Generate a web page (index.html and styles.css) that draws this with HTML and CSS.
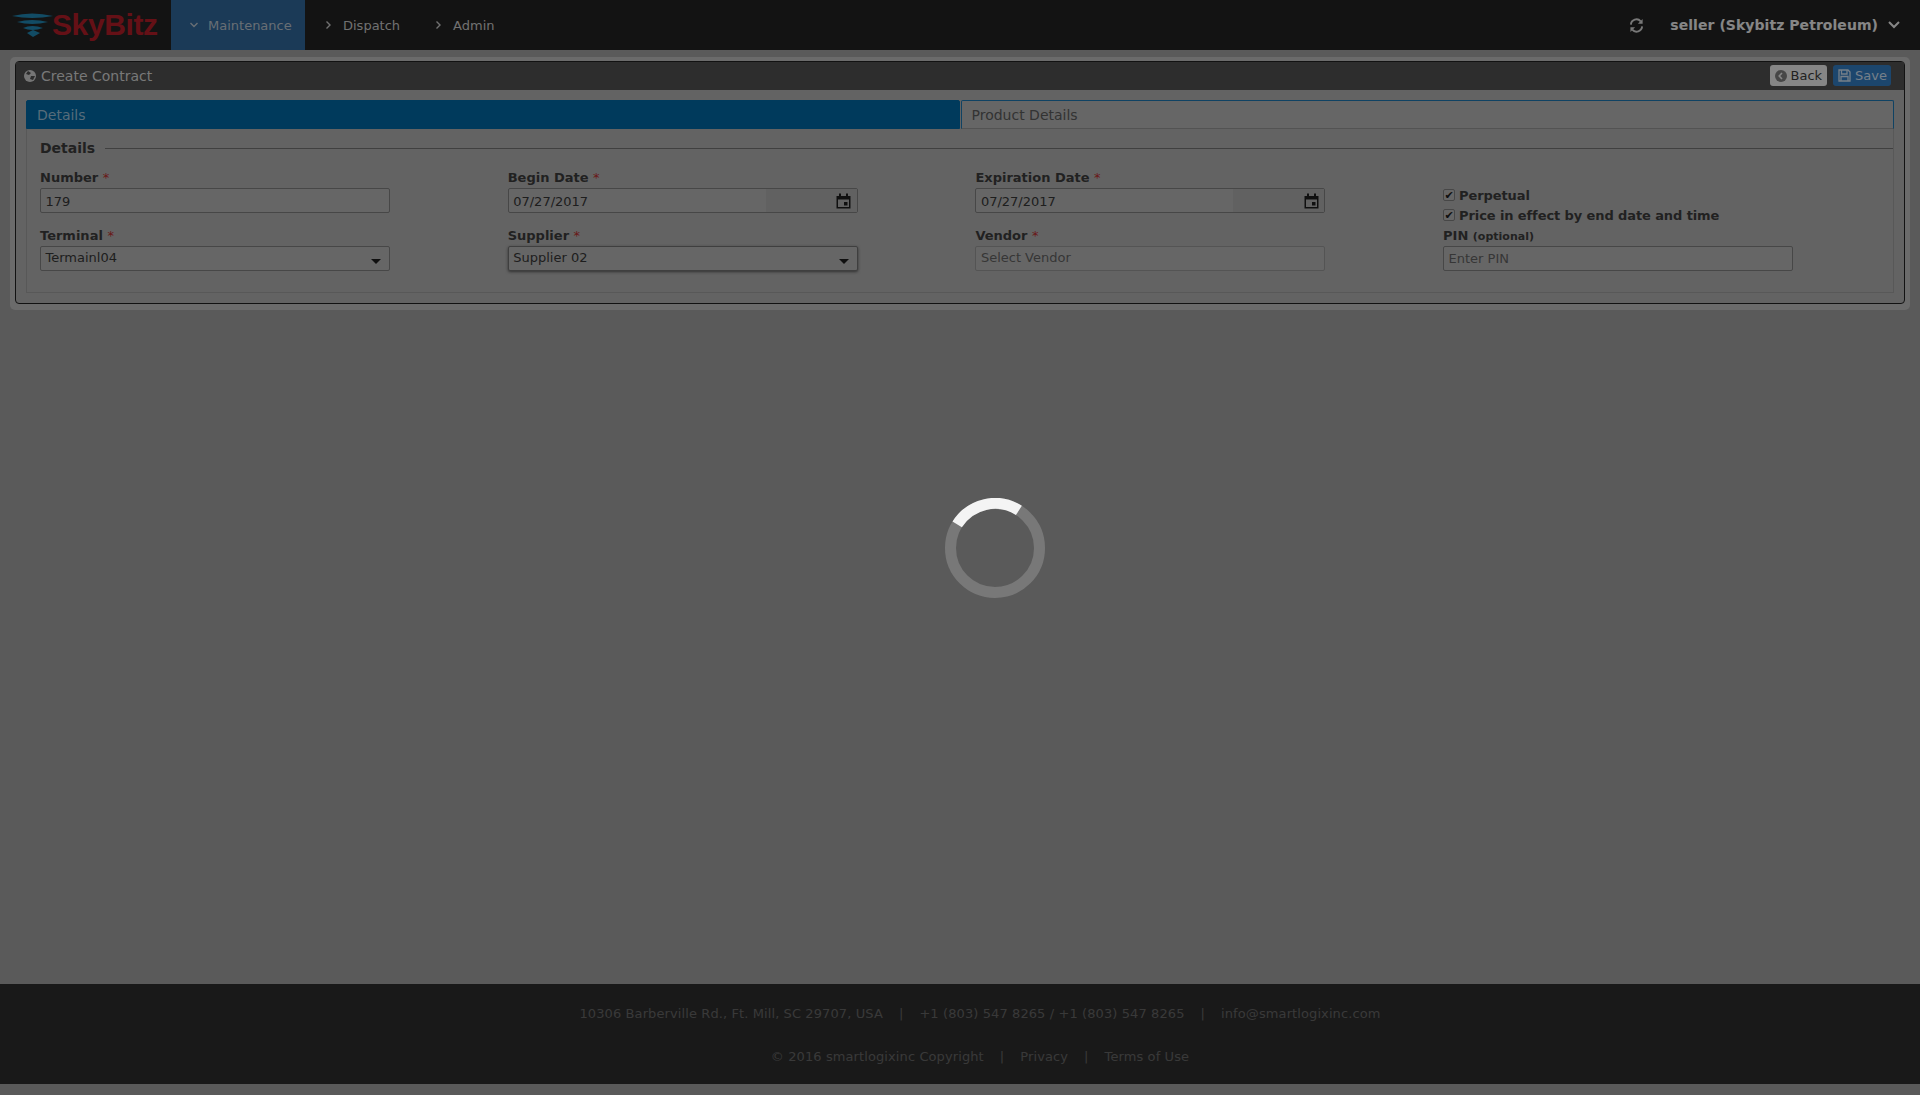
FILE: index.html
```html
<!DOCTYPE html>
<html lang="en">
<head>
    <meta charset="UTF-8">
    <meta name="viewport" content="width=device-width, initial-scale=1.0">
    <title>Create Contract</title>
    <link rel="stylesheet" href="styles.css">
</head>
<body>
    <header class="topbar">
        <a class="logo">
            <svg class="logo-mark" width="42" height="26" viewBox="0 0 42 26">
                <path d="M0 4 Q20 -1 41 4 Q20 8 0 4Z" fill="#1f7fa8"/>
                <path d="M5 10 Q20 6 36 10 Q20 14 5 10Z" fill="#1f7fa8"/>
                <path d="M11 16 Q20 12 31 16 Q20 20 11 16Z" fill="#1f7fa8"/>
                <path d="M15 21 L21 18 L28 21 L21 25Z" fill="#1f7fa8"/>
            </svg>
            <span class="logo-text">SkyBitz</span>
        </a>
        <nav class="nav">
            <a class="nav-item active">
                <svg width="10" height="10" viewBox="0 0 10 10"><path d="M1.5 3 L5 6.5 L8.5 3" class="chev"/></svg>
                Maintenance
            </a>
            <a class="nav-item">
                <svg width="10" height="10" viewBox="0 0 10 10"><path d="M3.5 1.5 L7 5 L3.5 8.5" class="chev"/></svg>
                Dispatch
            </a>
            <a class="nav-item">
                <svg width="10" height="10" viewBox="0 0 10 10"><path d="M3.5 1.5 L7 5 L3.5 8.5" class="chev"/></svg>
                Admin
            </a>
        </nav>
        <div class="user-area">
            <svg class="refresh" width="15" height="15" viewBox="0 0 16 16">
                <path d="M2 7 A6 6 0 0 1 12.5 3.5" class="refresh-line"/>
                <path d="M14 9 A6 6 0 0 1 3.5 12.5" class="refresh-line"/>
                <path d="M14.5 1 V6.2 H9.5Z" class="refresh-tip"/>
                <path d="M1.5 15 V9.8 H6.5Z" class="refresh-tip"/>
            </svg>
            <span class="user-name">seller (Skybitz Petroleum)</span>
            <svg width="14" height="14" viewBox="0 0 14 14"><path d="M2 4 L7 9 L12 4" class="user-chev"/></svg>
        </div>
    </header>

    <main class="page">
        <section class="panel-wrap">
            <div class="panel">
                <div class="panel-head">
                    <div class="panel-title">
                        <svg width="12" height="12" viewBox="0 0 12 12">
                            <circle cx="6" cy="6" r="6" fill="#c4c4c4"/>
                            <path d="M4 1 L7 3 L5 5 L2 4Z M7 6 L11 6 L9 10 L6 9Z" fill="#4b4b4b"/>
                        </svg>
                        Create Contract
                    </div>
                    <div class="panel-actions">
                        <button class="btn btn-back">
                            <svg width="12" height="12" viewBox="0 0 12 12">
                                <circle cx="6" cy="6" r="6" fill="#777"/>
                                <path d="M7 3 L4.2 6 L7 9" fill="none" stroke="#e0e0e0" stroke-width="1.6"/>
                            </svg>
                            Back
                        </button>
                        <button class="btn btn-save">
                            <svg width="13" height="13" viewBox="0 0 13 13">
                                <path d="M1 1 H10 L12 3 V12 H1Z M3.5 1.5 V5 H9 V1.5 M3 12 V7.5 H10 V12" fill="none" stroke="#c4d4e4" stroke-width="1.3"/>
                            </svg>
                            Save
                        </button>
                    </div>
                </div>
                <div class="panel-body">
                    <div class="tabs">
                        <a class="tab tab-active">Details</a>
                        <a class="tab">Product Details</a>
                    </div>
                    <div class="fieldset">
                        <div class="legend"><span>Details</span></div>
                        <div class="form-grid">
                            <div class="field">
                                <label>Number <em>*</em></label>
                                <div class="input">179</div>
                            </div>
                            <div class="field">
                                <label>Begin Date <em>*</em></label>
                                <div class="input input-date">
                                    07/27/2017
                                    <span class="date-btn">
                                        <svg width="17" height="16" viewBox="0 0 16 16"><path d="M1 3 H15 V15.5 H1Z M2.5 6.5 V14 H13.5 V6.5Z M3.5 0.5 H5.5 V3 H3.5Z M10.5 0.5 H12.5 V3 H10.5Z M8.5 9 H12 V12.5 H8.5Z" fill="#1c1c1c" fill-rule="evenodd"/></svg>
                                    </span>
                                </div>
                            </div>
                            <div class="field">
                                <label>Expiration Date <em>*</em></label>
                                <div class="input input-date">
                                    07/27/2017
                                    <span class="date-btn">
                                        <svg width="17" height="16" viewBox="0 0 16 16"><path d="M1 3 H15 V15.5 H1Z M2.5 6.5 V14 H13.5 V6.5Z M3.5 0.5 H5.5 V3 H3.5Z M10.5 0.5 H12.5 V3 H10.5Z M8.5 9 H12 V12.5 H8.5Z" fill="#1c1c1c" fill-rule="evenodd"/></svg>
                                    </span>
                                </div>
                            </div>
                            <div class="field checks">
                                <div class="check"><span class="box">&#10004;</span>Perpetual</div>
                                <div class="check"><span class="box">&#10004;</span>Price in effect by end date and time</div>
                            </div>
                            <div class="field">
                                <label>Terminal <em>*</em></label>
                                <div class="input input-select">Termainl04<i class="caret"></i></div>
                            </div>
                            <div class="field">
                                <label>Supplier <em>*</em></label>
                                <div class="input input-select input-focus">Supplier 02<i class="caret"></i></div>
                            </div>
                            <div class="field">
                                <label>Vendor <em>*</em></label>
                                <div class="input input-select input-faint placeholder">Select Vendor</div>
                            </div>
                            <div class="field">
                                <label>PIN <small>(optional)</small></label>
                                <div class="input input-pin placeholder">Enter PIN</div>
                            </div>
                        </div>
                    </div>
                </div>
            </div>
        </section>
    </main>

    <footer class="footer">
        <p>10306 Barberville Rd., Ft. Mill, SC 29707, USA<span class="sep">|</span>+1 (803) 547 8265 / +1 (803) 547 8265<span class="sep">|</span>info@smartlogixinc.com</p>
        <p>&copy; 2016 smartlogixinc Copyright<span class="sep">|</span>Privacy<span class="sep">|</span>Terms of Use</p>
    </footer>

    <div class="overlay">
        <svg width="100" height="100" viewBox="0 0 100 100">
            <circle cx="50" cy="50" r="44.5" fill="none" stroke="#787878" stroke-width="11"/>
            <path d="M12.2 26.4 A44.5 44.5 0 0 1 73.9 12.4" fill="none" stroke="#f4f4f4" stroke-width="11"/>
        </svg>
    </div>
</body>
</html>
```

FILE: styles.css
```css
* {
    box-sizing: border-box;
}
html, body {
    height: 100%;
}
body {
    margin: 0;
    display: flex;
    flex-direction: column;
    font-family: "DejaVu Sans", Verdana, sans-serif;
    font-size: 13px;
    color: #383838;
    background-color: #969696;
}
.topbar {
    height: 50px;
    flex-shrink: 0;
    display: flex;
    align-items: stretch;
    background-color: #212121;
}
.logo {
    width: 171px;
    display: flex;
    align-items: center;
    padding: 0 0 0 12px;
}
.logo-mark {
    flex-shrink: 0;
    margin-right: -2px;
}
.logo-text {
    font-family: "Liberation Sans", Arial, sans-serif;
    font-weight: bold;
    font-size: 30px;
    letter-spacing: -0.4px;
    color: #a81c26;
}
.nav {
    display: flex;
}
.nav-item {
    display: flex;
    align-items: center;
    gap: 10px;
    padding: 0 15px 0 18px;
    color: #bdbdbd;
}
.nav-item svg {
    flex-shrink: 0;
}
.nav-item.active {
    width: 134px;
    padding: 0 0 0 18px;
    gap: 9px;
    background-color: #2d6191;
    color: #aeb8c2;
}
.chev {
    fill: none;
    stroke: currentColor;
    stroke-width: 1.4;
}
.user-area {
    margin-left: auto;
    display: flex;
    align-items: center;
    padding-right: 19px;
    color: #e0e0e0;
}
.refresh {
    margin-right: 26px;
}
.refresh-line {
    fill: none;
    stroke: #c8c8c8;
    stroke-width: 2;
}
.refresh-tip {
    fill: #c8c8c8;
}
.user-name {
    font-weight: bold;
    font-size: 14px;
    letter-spacing: 0.05px;
    margin-right: 9px;
}
.user-chev {
    fill: none;
    stroke: #e0e0e0;
    stroke-width: 2;
}
.page {
    flex: 1;
    padding: 7px 10px 0;
}
.panel-wrap {
    padding: 4px 5px 6px;
    border-radius: 5px;
    background-color: #b2b2b2;
}
.panel {
    border: 1px solid #1f1f1f;
    border-radius: 4px;
    background-color: #a5a5a5;
}
.panel-head {
    height: 28px;
    display: flex;
    align-items: center;
    justify-content: space-between;
    padding: 0 13px 0 8px;
    background-color: #4b4b4b;
}
.panel-title {
    display: flex;
    align-items: center;
    gap: 5px;
    font-size: 14px;
    color: #c8c8c8;
}
.panel-actions {
    display: flex;
    gap: 6px;
    margin-top: -1px;
}
.btn {
    height: 21px;
    display: flex;
    align-items: center;
    gap: 4px;
    padding: 0 4px 0 5px;
    border: 0;
    border-radius: 3px;
    font-family: inherit;
    font-size: 13px;
}
.btn-back {
    padding-right: 5px;
    background-color: #e0e0e0;
    color: #383838;
}
.btn-save {
    background-color: #3076b6;
    color: #c4d4e4;
}
.panel-body {
    padding: 10px;
}
.tabs {
    display: flex;
    gap: 1px;
}
.tab {
    flex: 1;
    height: 29px;
    display: flex;
    align-items: center;
    padding: 0 10px;
    font-size: 14px;
    color: #555;
    border: 1px solid #1a6ea5;
    border-bottom-color: #8a8a8a;
    border-radius: 2px 2px 0 0;
    background-color: #aaa;
}
.tab-active {
    border-color: #006199;
    background-color: #006199;
    color: #8fb4cc;
}
.fieldset {
    height: 164px;
    padding: 0 13px;
    border: 1px solid #939393;
    border-top: 0;
}
.legend {
    height: 38px;
    display: flex;
    align-items: center;
    gap: 10px;
    font-size: 14px;
    font-weight: bold;
}
.legend::after {
    content: "";
    flex: 1;
    margin-right: -13px;
    height: 1px;
    background-color: #6c6c6c;
}
.form-grid {
    display: grid;
    grid-template-columns: repeat(3, 467.7px) 1fr;
    row-gap: 2px;
    margin-top: 2px;
}
.field label {
    display: block;
    height: 19px;
    line-height: 18px;
    font-weight: bold;
}
em {
    font-style: normal;
    font-weight: normal;
    color: #b02a2a;
}
small {
    font-size: 11px;
}
.input {
    position: relative;
    width: 350px;
    height: 25px;
    line-height: 25px;
    padding: 0 4.5px;
    border: 1px solid #777;
    border-radius: 2px;
    background-color: #aaa;
    color: #333;
}
.input-select {
    line-height: 21px;
}
.input-pin {
    line-height: 24px;
}
.input-focus {
    border-color: #6a6a6a;
    box-shadow: 0 1px 3px rgba(0, 0, 0, 0.5);
}
.input-faint {
    border-color: #8c8c8c;
}
.placeholder {
    color: #5a5a5a;
}
.date-btn {
    position: absolute;
    right: 0;
    top: 0;
    bottom: 0;
    width: 26px;
    display: flex;
    align-items: center;
    justify-content: center;
    background-color: #a2a2a2;
}
.date-btn::before {
    content: "";
    position: absolute;
    right: 26px;
    top: 0;
    bottom: 0;
    width: 65px;
    background-color: #a2a2a2;
}
.caret {
    position: absolute;
    right: 8px;
    top: 12px;
    border: 5px solid transparent;
    border-top-color: #1c1c1c;
    border-bottom: 0;
}
.checks {
    padding-top: 16px;
}
.check {
    height: 20px;
    display: flex;
    align-items: center;
    gap: 4px;
    font-weight: bold;
    letter-spacing: -0.1px;
}
.box {
    width: 12px;
    height: 12px;
    display: flex;
    align-items: center;
    justify-content: center;
    border: 1px solid #777;
    border-radius: 2px;
    font-size: 11px;
    font-weight: normal;
    color: #1c1c1c;
    background-color: #aaa;
}
.footer {
    height: 100px;
    flex-shrink: 0;
    margin-bottom: 11px;
    padding: 20px 0 0 40px;
    text-align: center;
    letter-spacing: 0.1px;
    background-color: #2b2b2b;
    color: #606060;
}
.footer p {
    margin: 0 0 23px;
    height: 20px;
    line-height: 20px;
}
.sep {
    margin: 0 16px;
}
.overlay {
    position: fixed;
    inset: 0;
    display: flex;
    align-items: center;
    justify-content: center;
    padding-left: 70px;
    background-color: rgba(0, 0, 0, 0.4);
}
```
